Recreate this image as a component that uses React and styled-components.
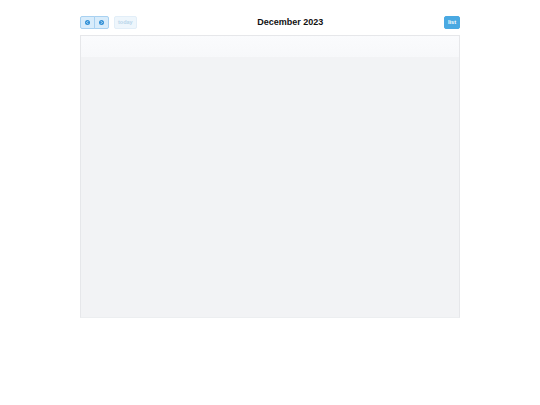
import styled, { createGlobalStyle } from "styled-components";

const GlobalStyle = createGlobalStyle`
  body {
    margin: 0;
    background: #ffffff;
    font-family: "Liberation Sans", Arial, sans-serif;
  }
`;

const Page = styled.div`
  width: 380px;
  margin: 0 auto;
  padding-top: 16px;
`;

const Toolbar = styled.div`
  display: flex;
  justify-content: space-between;
  align-items: center;
  height: 13px;
  margin-bottom: 6px;
`;

const Left = styled.div`
  display: flex;
  align-items: center;
  gap: 5px;
`;

const Group = styled.div`
  display: flex;
`;

const NavButton = styled.button`
  width: 15px;
  height: 13px;
  padding: 0;
  display: flex;
  align-items: center;
  justify-content: center;
  background: #d8ecfb;
  border: 1px solid #a8d1f1;
  border-radius: ${(p) => (p.$first ? "2px 0 0 2px" : "0 2px 2px 0")};
  margin-left: ${(p) => (p.$first ? "0" : "-1px")};
`;

const TextButton = styled.button`
  height: 13px;
  padding: 0 3px;
  font-family: "Liberation Sans", Arial, sans-serif;
  font-size: 5.5px;
  font-weight: bold;
  line-height: 1;
  border-radius: 2px;
  min-width: ${(p) => (p.$primary ? "16px" : "22px")};
  background: ${(p) => (p.$primary ? "#4aa9e2" : "#eef6fc")};
  border: 1px solid ${(p) => (p.$primary ? "#4aa9e2" : "#e2eef8")};
  color: ${(p) => (p.$primary ? "#ffffff" : "#b9d5ea")};
`;

const Title = styled.h2`
  margin: 0;
  font-size: 9px;
  font-weight: bold;
  color: #111111;
  position: relative;
  top: -1px;
`;

const Calendar = styled.div`
  height: 281px;
  border: 1px solid #e6e7ea;
  border-bottom-color: #eceef0;
  display: flex;
  flex-direction: column;
  background: #f2f3f5;
`;

const HeadStrip = styled.div`
  height: 21px;
  background: linear-gradient(#fafbfd, #f7f8fa);
`;

function Arrow({ dir }) {
  return (
    <svg width="5" height="5" viewBox="0 0 10 10">
      <circle cx="5" cy="5" r="5" fill="#2f8fd6" />
      <path
        d={dir === "left" ? "M6 2.5 L3.5 5 L6 7.5" : "M4 2.5 L6.5 5 L4 7.5"}
        stroke="#ffffff"
        strokeWidth="1.6"
        fill="none"
      />
    </svg>
  );
}

export default function App() {
  return (
    <>
      <GlobalStyle />
      <Page>
        <Toolbar>
          <Left>
            <Group>
              <NavButton $first>
                <Arrow dir="left" />
              </NavButton>
              <NavButton>
                <Arrow dir="right" />
              </NavButton>
            </Group>
            <TextButton disabled>today</TextButton>
          </Left>
          <Title>December 2023</Title>
          <TextButton $primary>list</TextButton>
        </Toolbar>
        <Calendar>
          <HeadStrip />
        </Calendar>
      </Page>
    </>
  );
}
